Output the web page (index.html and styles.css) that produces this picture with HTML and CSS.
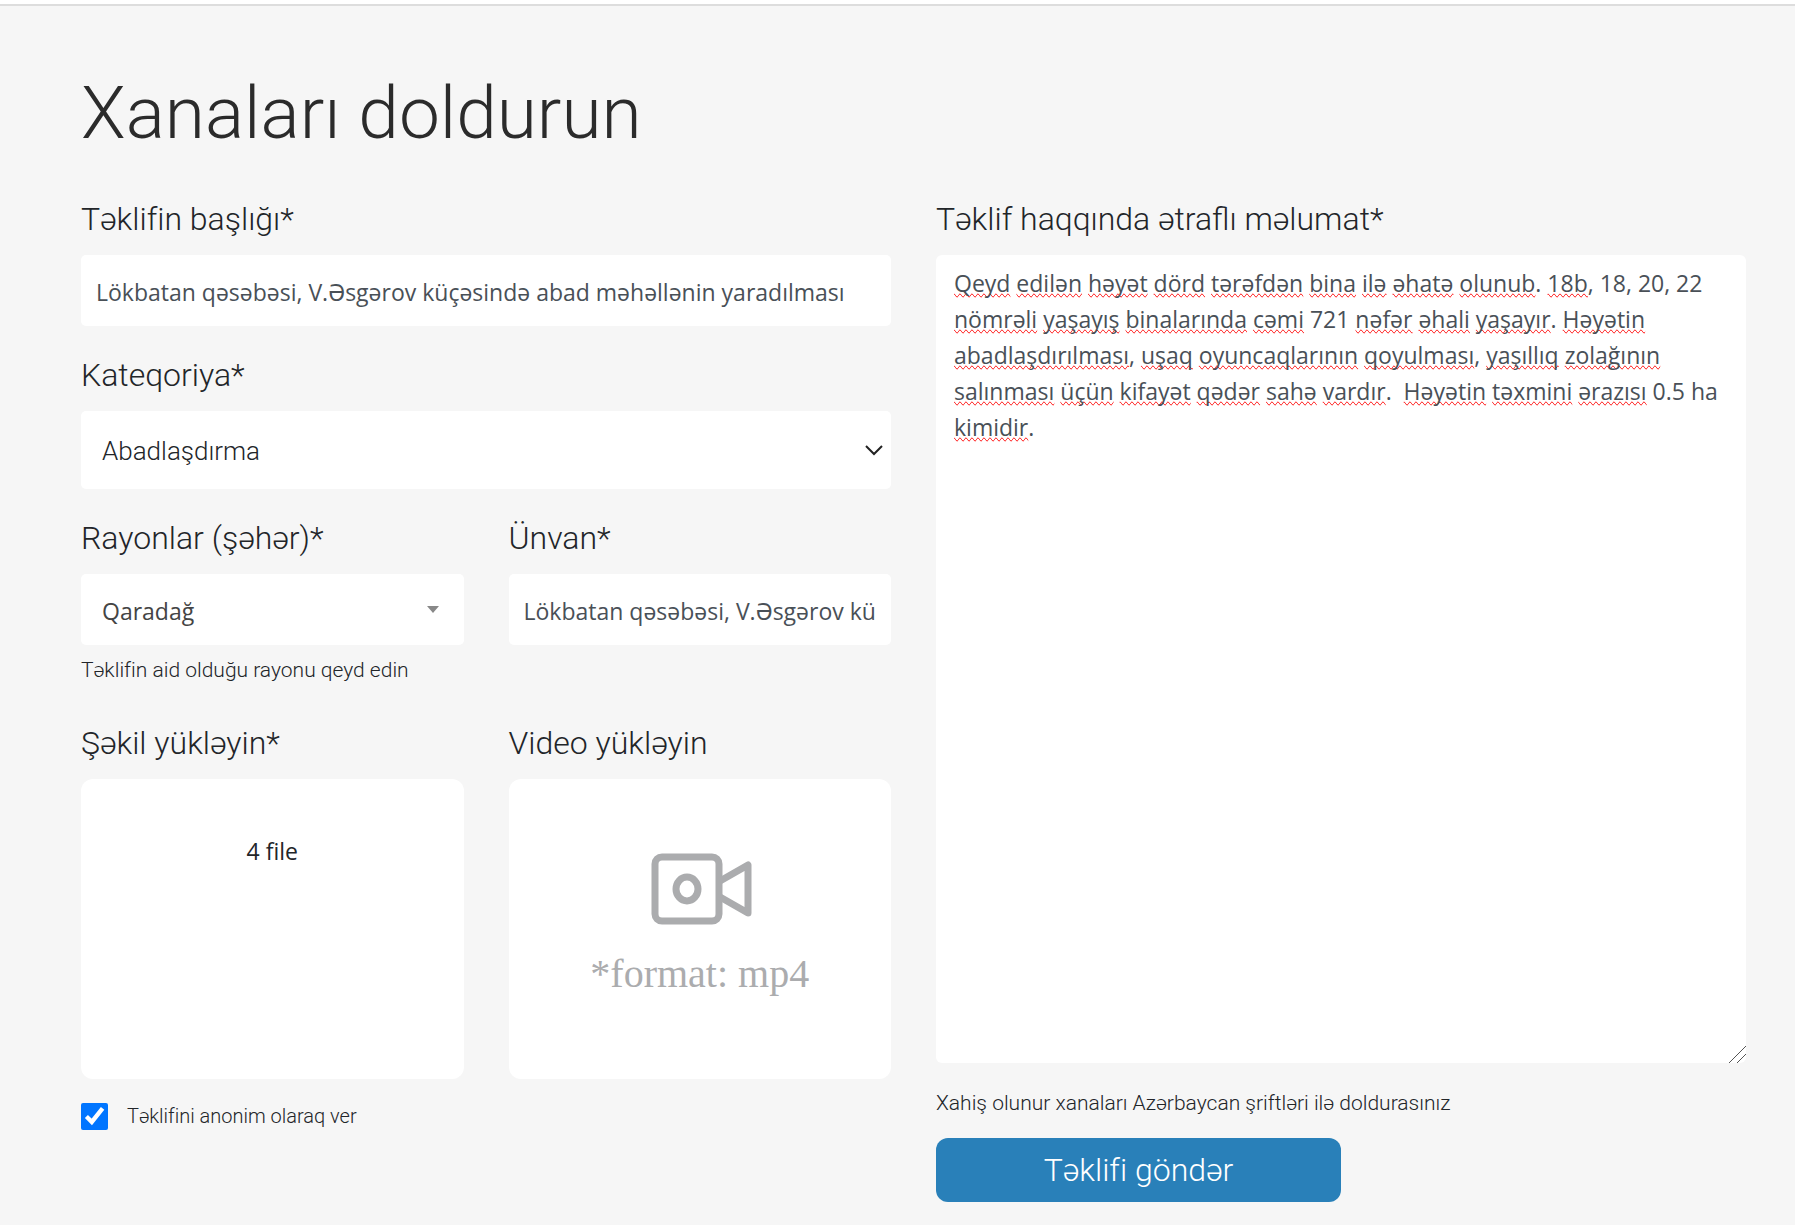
FILE: index.html
```html
<!DOCTYPE html>
<html lang="az">
<head>
<meta charset="utf-8">
<meta name="viewport" content="width=device-width, initial-scale=1">
<title>Xanaları doldurun</title>
<link rel="stylesheet" href="styles.css">
</head>
<body>
<main class="page">
  <h1 class="page-title">Xanaları doldurun</h1>
  <form class="form">
    <div class="column">
      <div class="field">
        <label class="label" for="title">Təklifin başlığı*</label>
        <input class="control" id="title" type="text" value="Lökbatan qəsəbəsi, V.Əsgərov küçəsində abad məhəllənin yaradılması">
      </div>
      <div class="field">
        <label class="label" for="category">Kateqoriya*</label>
        <div class="select-wrap">
          <select class="control control-select control-tall" id="category">
            <option>Abadlaşdırma</option>
          </select>
          <svg class="chevron" viewBox="0 0 18 12" aria-hidden="true"><path d="M1 2l8 8 8-8" fill="none" stroke="#222" stroke-width="2"/></svg>
        </div>
      </div>
      <div class="pair">
        <div class="field">
          <label class="label" for="district">Rayonlar (şəhər)*</label>
          <div class="select-wrap">
            <select class="control control-select" id="district">
              <option>Qaradağ</option>
            </select>
            <svg class="caret" viewBox="0 0 12 7" aria-hidden="true"><path d="M0 0h12L6 7z" fill="#888"/></svg>
          </div>
          <p class="hint">Təklifin aid olduğu rayonu qeyd edin</p>
        </div>
        <div class="field">
          <label class="label" for="address">Ünvan*</label>
          <input class="control" id="address" type="text" value="Lökbatan qəsəbəsi, V.Əsgərov küçəsində">
        </div>
      </div>
      <div class="pair uploads">
        <div class="field">
          <label class="label" for="images">Şəkil yükləyin*</label>
          <label class="drop" for="images">
            <input class="file-input" id="images" type="file" accept="image/*" multiple>
            <span class="file-count">4 file</span>
          </label>
        </div>
        <div class="field">
          <label class="label" for="video">Video yükləyin</label>
          <label class="drop drop-video" for="video">
            <input class="file-input" id="video" type="file" accept="video/mp4">
            <svg class="camera" viewBox="-4 0 105 72" aria-hidden="true">
              <g fill="none" stroke="#abacae" stroke-width="7" stroke-linejoin="round">
                <rect x="4" y="4" width="64" height="64" rx="7"/>
                <ellipse cx="36" cy="36" rx="11" ry="12"/>
                <path d="M69 28l28-16v48L69 44"/>
              </g>
            </svg>
            <span class="format">*format: mp4</span>
          </label>
        </div>
      </div>
      <label class="check"><input class="checkbox" type="checkbox" checked>Təklifini anonim olaraq ver</label>
    </div>
    <div class="column">
      <label class="label" for="details">Təklif haqqında ətraflı məlumat*</label>
      <div class="editor">
        <div class="spelling" aria-hidden="true"></div>
        <textarea class="details" id="details" spellcheck="false">Qeyd edilən həyət dörd tərəfdən bina ilə əhatə olunub. 18b, 18, 20, 22 nömrəli yaşayış binalarında cəmi 721 nəfər əhali yaşayır. Həyətin abadlaşdırılması, uşaq oyuncaqlarının qoyulması, yaşıllıq zolağının salınması üçün kifayət qədər sahə vardır.  Həyətin təxmini ərazısı 0.5 ha kimidir.</textarea>
        <svg class="grip" viewBox="0 0 17 17" aria-hidden="true"><path d="M0 17L17 0M8 17l9-9" fill="none" stroke="#555"/></svg>
      </div>
      <p class="hint note">Xahiş olunur xanaları Azərbaycan şriftləri ilə doldurasınız</p>
      <button class="submit" type="submit">Təklifi göndər</button>
    </div>
  </form>
</main>
<script src="script.js"></script>
</body>
</html>
```
FILE: styles.css
```css
* { box-sizing: border-box; }

body {
  margin: 0;
  background: #f6f6f6;
  color: #222529;
  font-family: Roboto, "Liberation Sans", sans-serif;
  font-weight: 300;
  border-top: 4px solid #fff;
}

.page {
  border-top: 2px solid #ddd;
  padding: 59px 49px 23px 81px;
}

.page-title {
  margin: 0 0 36px;
  font-size: 73px;
  line-height: 96px;
  font-weight: 300;
  color: #2b2b2b;
}

.form {
  display: grid;
  grid-template-columns: 1fr 1fr;
  gap: 45px;
}

.column {
  display: flex;
  flex-direction: column;
  min-width: 0;
}

.field {
  display: flex;
  flex-direction: column;
  min-width: 0;
  margin-bottom: 27px;
}

.pair {
  display: grid;
  grid-template-columns: 1fr 1fr;
  gap: 45px;
}

.uploads { margin-top: 10px; }
.uploads .field { margin-bottom: 24px; }

.label {
  margin-bottom: 13px;
  font-size: 32px;
  line-height: 45px;
}

.control {
  width: 100%;
  height: 71px;
  padding: 2px 15px 0;
  border: 0;
  border-radius: 5px;
  background: #fff;
  color: #495057;
  font: 400 23px "Open Sans", "Noto Sans", sans-serif;
  appearance: none;
}

.control-select { padding: 2px 48px 0 21px; color: #444; }

.control-tall {
  height: 78px;
  color: #222529;
  font: 300 26px Roboto, "Liberation Sans", sans-serif;
}

.select-wrap { display: grid; align-items: center; }
.select-wrap > * { grid-area: 1 / 1; }

.chevron, .caret { justify-self: end; pointer-events: none; }
.chevron { width: 18px; height: 12px; margin-right: 8px; }
.caret { width: 12px; height: 7px; margin-right: 25px; }

.hint {
  margin: 12px 0 0;
  font-size: 21px;
  line-height: 27px;
}

.drop {
  display: flex;
  flex-direction: column;
  align-items: center;
  height: 300px;
  padding-top: 55px;
  border-radius: 12px;
  background: #fff;
  cursor: pointer;
}

.drop-video { padding-top: 73px; }

.file-input {
  width: 1px;
  height: 1px;
  margin: 0;
  opacity: 0;
}

.file-count {
  font: 400 23px/32px "Open Sans", "Noto Sans", sans-serif;
}

.camera { width: 105px; height: 72px; }

.format {
  margin-top: 25px;
  font: 400 40px/48px "Liberation Serif", serif;
  color: #abacae;
}

.check {
  display: flex;
  align-items: center;
  gap: 19px;
  font-size: 20px;
  line-height: 27px;
}

.checkbox {
  width: 27px;
  height: 27px;
  margin: 0;
  accent-color: #0075ff;
}

.editor {
  display: grid;
  height: 808px;
  border-radius: 6px;
  background: #fff;
}

.spelling, .details {
  grid-area: 1 / 1;
  margin: 0;
  padding: 10px 18px;
  border: 0;
  font: 400 23px/36px "Open Sans", "Noto Sans", sans-serif;
  white-space: pre-wrap;
  overflow-wrap: break-word;
}

.spelling { color: transparent; }

.misspelled { text-decoration: spelling-error; }

.details {
  background: transparent;
  color: #495057;
  resize: vertical;
}

.details::-webkit-resizer { display: none; }

.grip {
  grid-area: 1 / 1;
  place-self: end;
  width: 17px;
  height: 17px;
  pointer-events: none;
}

.note { margin: 27px 0 21px; }

.submit {
  width: 50%;
  height: 64px;
  padding: 0;
  border: 0;
  border-radius: 12px;
  background: #2980b9;
  color: #fff;
  font: 300 32px Roboto, "Liberation Sans", sans-serif;
}
```
FILE: script.js
```js
// Underlines unknown words behind the transparent text box.
const known = new Set(["ha"]);
const details = document.getElementById("details");
const layer = document.querySelector(".spelling");

function mark() {
  layer.textContent = "";
  for (const part of details.value.split(/([\p{L}\p{N}]+)/u)) {
    if (/\p{L}/u.test(part) && !known.has(part)) {
      const word = document.createElement("span");
      word.className = "misspelled";
      word.textContent = part;
      layer.append(word);
    } else {
      layer.append(part);
    }
  }
}

details.addEventListener("input", mark);
mark();
```
